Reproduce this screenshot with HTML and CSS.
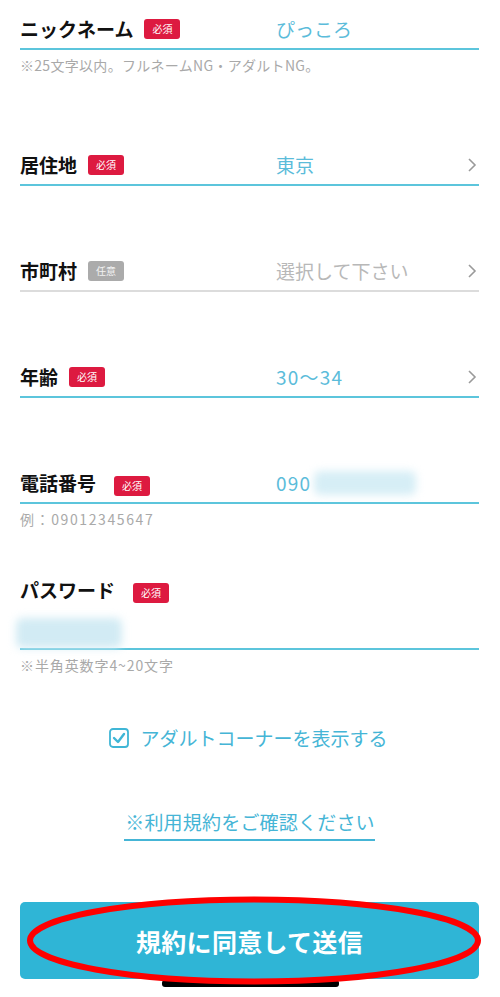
FILE: index.html
```html
<!DOCTYPE html>
<html lang="ja">
<head>
<meta charset="utf-8">
<title>登録</title>
<link rel="stylesheet" href="styles.css">
</head>
<body>
<div class="page">
  <form class="form">
    <div class="field field-first">
      <div class="row">
        <div class="label"><span class="label-text">ニックネーム</span><span class="badge">必須</span></div>
        <div class="value">ぴっころ</div>
      </div>
      <div class="note">※25文字以内。フルネームNG・アダルトNG。</div>
    </div>

    <div class="field">
      <div class="row">
        <div class="label"><span class="label-text">居住地</span><span class="badge">必須</span></div>
        <div class="value">東京</div>
        <svg class="chev" viewBox="0 0 10 16" width="10" height="16"><path d="M2 2 L8 8 L2 14" fill="none" stroke="#9a9a9a" stroke-width="1.6"/></svg>
      </div>
    </div>

    <div class="field field-gap">
      <div class="row row-gray">
        <div class="label"><span class="label-text">市町村</span><span class="badge badge-gray">任意</span></div>
        <div class="value value-ph">選択して下さい</div>
        <svg class="chev" viewBox="0 0 10 16" width="10" height="16"><path d="M2 2 L8 8 L2 14" fill="none" stroke="#9a9a9a" stroke-width="1.6"/></svg>
      </div>
    </div>

    <div class="field field-gap">
      <div class="row">
        <div class="label"><span class="label-text">年齢</span><span class="badge">必須</span></div>
        <div class="value value-num">30〜34</div>
        <svg class="chev" viewBox="0 0 10 16" width="10" height="16"><path d="M2 2 L8 8 L2 14" fill="none" stroke="#9a9a9a" stroke-width="1.6"/></svg>
      </div>
    </div>

    <div class="field field-gap">
      <div class="row">
        <div class="label"><span class="label-text">電話番号</span><span class="badge badge-low">必須</span></div>
        <div class="value value-num">090<span class="blur blur-tel"></span></div>
      </div>
      <div class="note note-tel">例：09012345647</div>
    </div>

    <div class="field field-pw">
      <div class="label label-pw"><span class="label-text">パスワード</span><span class="badge badge-low">必須</span></div>
      <div class="pw-input"><span class="blur blur-pw"></span></div>
      <div class="note note-pw">※半角英数字4~20文字</div>
    </div>

    <label class="check">
      <svg class="check-box" viewBox="0 0 20 20" width="20" height="20"><rect x="1" y="1" width="18" height="18" rx="3" fill="none" stroke="#3fb6d6" stroke-width="1.8"/><path d="M5 10 L9 14 L15 6" fill="none" stroke="#3fb6d6" stroke-width="2.4" stroke-linecap="round" stroke-linejoin="round"/></svg>
      <span class="check-text">アダルトコーナーを表示する</span>
    </label>

    <div class="terms-wrap"><a class="terms">※利用規約をご確認ください</a></div>

    <div class="btn-wrap">
      <button type="button" class="submit">規約に同意して送信</button>
    </div>
  </form>
  <div class="home-bar"></div>
  <svg class="circle" viewBox="0 0 500 997" width="500" height="997"><ellipse cx="254" cy="940.5" rx="224" ry="41" fill="none" stroke="#ff0000" stroke-width="6"/></svg>
</div>
</body>
</html>
```

FILE: styles.css
```css
* { box-sizing: border-box; }
html, body { margin: 0; padding: 0; background: #fff; }
body {
  font-family: "Noto Sans CJK JP", "Noto Sans", sans-serif;
  color: #111;
  width: 500px;
  height: 997px;
  overflow: hidden;
}
.page { position: relative; width: 500px; height: 997px; }
.form { padding: 0 21px 0 20px; display: flex; flex-direction: column; }

.field { display: flex; flex-direction: column; }
.field-first { margin-top: 12px; }
.field + .field { margin-top: 68px; }

.row {
  display: grid;
  grid-template-columns: 256px 1fr auto;
  align-items: center;
  height: 38px;
  border-bottom: 2px solid #5cc5dc;
  padding-bottom: 2px;
}
.row-gray { border-bottom-color: #dcdcdc; }

.label { display: flex; align-items: center; }
.label-text { font-size: 19px; font-weight: 700; line-height: 28px; letter-spacing: 0; }
.badge {
  display: inline-flex; align-items: center; justify-content: center;
  width: 36px; height: 20px; margin-left: 11px;
  background: #dd1a40; color: #fff; border-radius: 3px;
  font-size: 10px; line-height: 1; font-weight: 400;
}
.badge-gray { background: #ababab; color: #f2f2f2; }
.badge-low { margin-left: 18px; position: relative; top: 3px; }

.value { font-size: 19px; color: #5bbcda; line-height: 28px; white-space: nowrap; display: flex; align-items: center; }
.value-num { letter-spacing: 1.2px; }
.value-ph { color: #b8b8b8; }
.chev { margin-right: 2px; }

.blur {
  display: inline-block;
  background: #d6eef6;
  filter: blur(4px);
  border-radius: 6px;
}
.blur-tel { width: 102px; height: 24px; margin-left: 3px; }

.note { font-size: 14px; color: #a9a9a9; line-height: 22px; padding-top: 4px; height: 30px; letter-spacing: 0.3px; }
.note-tel { padding-top: 4px; letter-spacing: 1.6px; }
.note-pw { letter-spacing: 0.9px; }

.field-pw { margin-top: 42px !important; }
.label-pw { height: 28px; }
.pw-input {
  height: 46px;
  border-bottom: 2px solid #5cc5dc;
  position: relative;
}
.blur-pw { position: absolute; left: -4px; top: 14px; width: 106px; height: 30px; background: #d2ebf4; }
.note-pw { padding-top: 4px; }

.check {
  margin-top: 44px;
  height: 28px;
  display: flex; align-items: center; justify-content: center;
  gap: 11px;
  padding-right: 2px;
}
.check-text { font-size: 19px; color: #45b5d6; line-height: 28px; }

.terms-wrap { margin-top: 56px; display: flex; justify-content: center; }
.terms {
  font-size: 19px; color: #45b5d6; line-height: 28px;
  padding-bottom: 3px; border-bottom: 2px solid #45b5d6;
  margin-left: 0;
  padding-left: 1px;
  letter-spacing: 0.2px;
}

.btn-wrap { margin-top: 61px; }
.submit {
  width: 100%; height: 77px;
  border: 0; border-radius: 5px;
  background: #2fb5d6;
  color: #fff;
  font-family: "Noto Sans CJK JP", "Noto Sans", sans-serif;
  font-size: 25px; font-weight: 700;
  letter-spacing: 0.3px;
  padding: 0;
}

.home-bar {
  position: absolute; left: 162px; top: 980px;
  width: 177px; height: 7px; border-radius: 3px;
  background: #000;
}
.circle { position: absolute; left: 0; top: 0; pointer-events: none; }
```
